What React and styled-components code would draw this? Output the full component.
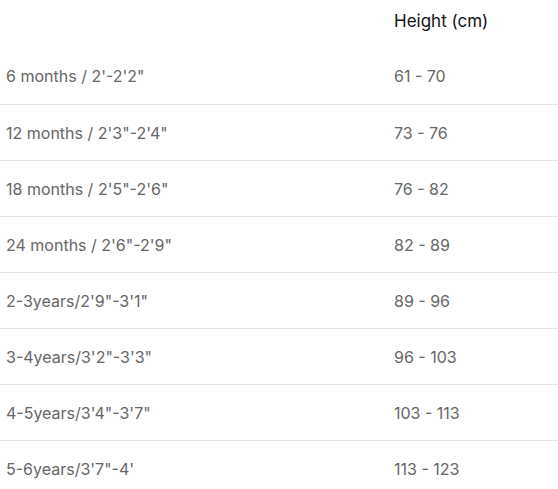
import styled, { createGlobalStyle } from "styled-components";

const GlobalStyle = createGlobalStyle`
  body {
    margin: 0;
    background: #ffffff;
    font-family: Inter, "Noto Sans", sans-serif;
  }
`;

const rows = [
  ["6 months / 2'-2'2\"", "61 - 70"],
  ["12 months / 2'3\"-2'4\"", "73 - 76"],
  ["18 months / 2'5\"-2'6\"", "76 - 82"],
  ["24 months / 2'6\"-2'9\"", "82 - 89"],
  ["2-3years/2'9\"-3'1\"", "89 - 96"],
  ["3-4years/3'2\"-3'3\"", "96 - 103"],
  ["4-5years/3'4\"-3'7\"", "103 - 113"],
  ["5-6years/3'7\"-4'", "113 - 123"],
];

const Table = styled.div`
  width: 558px;
  display: flex;
  flex-direction: column;
`;

const Row = styled.div`
  display: grid;
  grid-template-columns: 388px 1fr;
  height: ${(p) => (p.$head ? "48px" : "56px")};
  align-items: ${(p) => (p.$head ? "start" : "center")};
  border-top: ${(p) => (p.$divided ? "1px solid #e2e2e2" : "none")};
  box-sizing: border-box;
`;

const Cell = styled.div`
  padding: ${(p) => (p.$head ? "10px 6px 0" : "0 6px")};
  font-size: ${(p) => (p.$head ? "17px" : "16px")};
  line-height: 22px;
  color: ${(p) => (p.$head ? "#111111" : "#666666")};
`;

export default function App() {
  return (
    <>
      <GlobalStyle />
      <Table>
        <Row $head>
          <Cell $head />
          <Cell $head>Height (cm)</Cell>
        </Row>
        {rows.map(([size, height], i) => (
          <Row key={size} $divided={i > 0}>
            <Cell>{size}</Cell>
            <Cell>{height}</Cell>
          </Row>
        ))}
      </Table>
    </>
  );
}
